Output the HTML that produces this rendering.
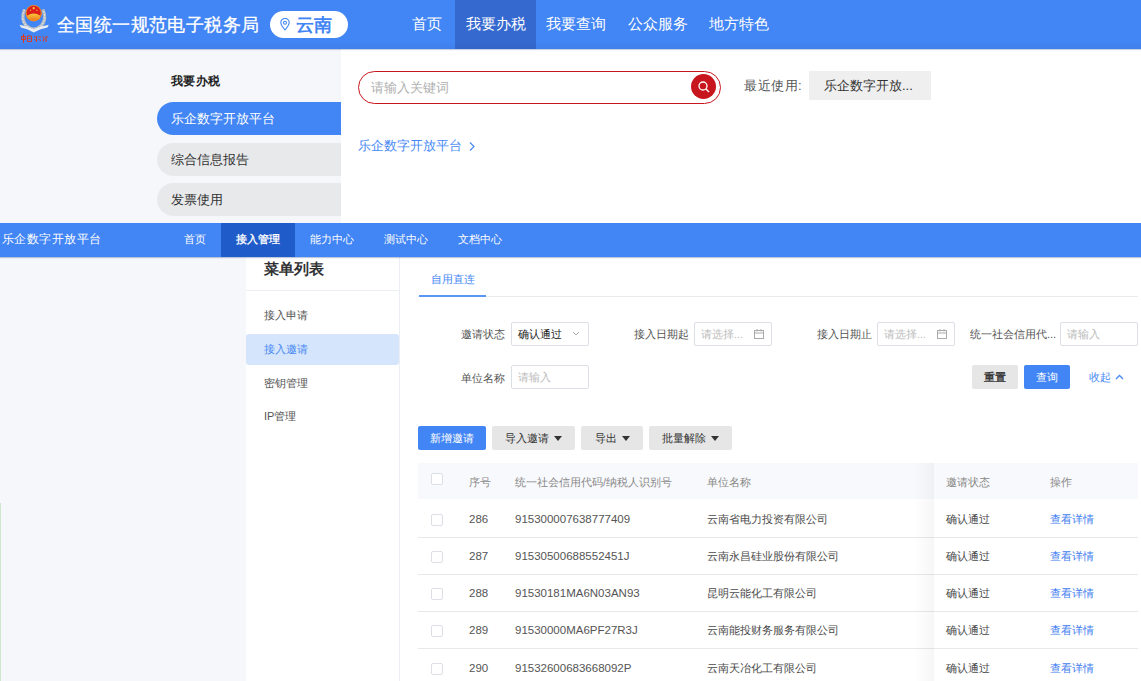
<!DOCTYPE html>
<html><head><meta charset="utf-8">
<style>
*{margin:0;padding:0;box-sizing:border-box}
html{background:#fff}
html,body{width:1141px;height:681px;overflow:hidden;font-family:"Liberation Sans",sans-serif;color:#333}
.a{position:absolute;white-space:nowrap}
#hdr{left:0;top:0;width:1141px;height:48.5px;background:linear-gradient(#4285f4 85%,#3f7fec);box-shadow:0 1px 1px rgba(0,40,120,.2)}
.nv{top:0;height:48px;line-height:47px;font-size:15px;color:#fff;text-align:center}
#sec1l{z-index:-1;left:0;top:48.5px;width:341px;height:174px;background:#f5f7fa}
#sec1r{z-index:-1;left:341px;top:48.5px;width:800px;height:174px;background:#fff}
.pill{left:157px;width:184px;height:33px;border-radius:16.5px 0 0 16.5px;background:#e8e9eb;font-size:13px;line-height:33px;padding-left:14px;color:#333}
#bar2{left:0;top:222.5px;width:1141px;height:34px;background:#4285f4;box-shadow:0 1px 1px rgba(0,40,120,.25)}
.nv2{top:0;height:34px;line-height:33px;font-size:11px;color:#fff;text-align:center;width:74px}
#sec3l{z-index:-1;left:0;top:257px;width:246px;height:424px;background:#f5f7fa}
#menu{z-index:-1;left:246px;top:257px;width:154px;height:424px;background:#fff;border-right:1px solid #ebeef5}
#cont{z-index:-1;left:400px;top:257px;width:741px;height:424px;background:#fff}
.mi{left:264px;font-size:11px;color:#555;line-height:13px}
.lbl{font-size:11px;color:#555;line-height:14px}
.inp{height:24px;border:1px solid #dcdfe6;border-radius:2px;background:#fff;font-size:11px;line-height:22px;padding-left:6px;color:#bbb}
.btn{height:24px;border-radius:2px;font-size:11px;line-height:24px;text-align:center;background:#e6e6e6;color:#333}
.th{font-size:11px;color:#888;line-height:14px}
.td{font-size:11px;color:#4a4a4a;line-height:14px}
.num{font-size:11.5px;color:#555;line-height:14px}
.cb{width:12px;height:12px;border:1px solid #dcdfe6;border-radius:2px;background:#fff}
.rl{left:418px;width:720px;height:1px;background:#e8e8e8}
.caret{display:inline-block;width:0;height:0;border-left:4px solid transparent;border-right:4px solid transparent;border-top:5px solid #333;vertical-align:middle;margin-left:5px;position:relative;top:-1px}
</style></head><body>
<!-- header -->
<div class="a" id="hdr"></div>
<svg class="a" style="left:15px;top:2px" width="40" height="44" viewBox="0 0 40 44">
<defs><linearGradient id="gg" x1="0" y1="0" x2="0" y2="1"><stop offset="0" stop-color="#f9c93a"/><stop offset="1" stop-color="#ef7d1e"/></linearGradient></defs>
<path d="M9.5 7.5 Q5.5 17 11 23.5 Q15 27 18.7 27 Q22.5 27 26.5 23.5 Q32 17 28 7.5" fill="none" stroke="#b9bdc4" stroke-width="3.2"/>
<path d="M9.5 7.5 Q5.5 17 11 23.5 Q15 27 18.7 27 Q22.5 27 26.5 23.5 Q32 17 28 7.5" fill="none" stroke="#dfe2e6" stroke-width="1.2" stroke-dasharray="1.5 1.5"/>
<path d="M4.6 22.8 Q11 24 18.7 27.5 Q26.5 24 33.8 22.8 L32.5 25.5 Q25.5 26.5 18.7 30.5 Q12 26.5 6 25.5 Z" fill="#eceef1"/>
<circle cx="18.7" cy="11.2" r="8.2" fill="#f08c24"/>
<circle cx="18.7" cy="10.8" r="7.1" fill="#dd1f1c"/>
<path d="M12.3 13.5 Q18.7 9.5 25.1 13.5 L24.6 17 Q18.7 19.6 12.8 17 Z" fill="url(#gg)"/>
<circle cx="18.7" cy="6.2" r="1.1" fill="#f6cf45"/>
<circle cx="15.5" cy="8.2" r=".6" fill="#f6cf45"/><circle cx="21.9" cy="8.2" r=".6" fill="#f6cf45"/>
<path d="M8.5 32 V41 M6.5 34.5 H10.5 V37.5 H6.5Z M12.5 34 H16.5 V39.5 H12.5Z M13.5 36.5 H15.5 M19 34 L20.5 35.5 M19 37 L20.5 38.5 M21.5 34 V40 M23.5 35 H26 M23.5 37.5 L26 38.5 M28 34.5 Q30.5 37 28 39.5 M30 35 H33 M31 36 V40" stroke="#d93a20" stroke-width="1" fill="none"/>
</svg>
<div class="a" style="left:57px;top:10.5px;font-size:18px;letter-spacing:.4px;line-height:28px;color:#fff;-webkit-text-stroke:.3px #fff">全国统一规范电子税务局</div>
<div class="a" style="left:270px;top:11px;width:78px;height:27px;border-radius:14px;background:#fff"></div>
<svg class="a" style="left:279px;top:18px" width="12" height="13" viewBox="0 0 12 13"><path d="M6 12 C3 8.5 1.8 6.5 1.8 4.6 A4.2 4.2 0 0 1 10.2 4.6 C10.2 6.5 9 8.5 6 12Z" fill="none" stroke="#4285f4" stroke-width="1.1"/><circle cx="6" cy="4.7" r="1.5" fill="none" stroke="#4285f4" stroke-width="1.1"/></svg>
<div class="a" style="left:296px;top:10.5px;font-size:18px;font-weight:bold;line-height:28px;color:#4285f4">云南</div>
<div class="a nv" style="left:401px;width:52px">首页</div>
<div class="a nv" style="left:455px;width:81px;height:48.5px;background:linear-gradient(#3669d0 85%,#3263c8)">我要办税</div>
<div class="a nv" style="left:536px;width:80px">我要查询</div>
<div class="a nv" style="left:618px;width:80px">公众服务</div>
<div class="a nv" style="left:699px;width:80px">地方特色</div>

<!-- section 1 -->
<div class="a" id="sec1l"></div>
<div class="a" id="sec1r"></div>
<div class="a" style="left:171px;top:74px;font-size:12px;letter-spacing:.4px;font-weight:bold;color:#222;line-height:15px">我要办税</div>
<div class="a pill" style="top:102px;background:#4285f4;color:#fff">乐企数字开放平台</div>
<div class="a pill" style="top:143px">综合信息报告</div>
<div class="a pill" style="top:183px">发票使用</div>

<div class="a" style="left:358px;top:71px;width:363px;height:33px;border:1.6px solid #c8161e;border-radius:17px;background:#fff"></div>
<div class="a" style="left:371px;top:79px;font-size:13px;color:#b0b0b0;line-height:17px">请输入关键词</div>
<div class="a" style="left:691px;top:74px;width:25px;height:25px;border-radius:50%;background:#c8161e"></div>
<svg class="a" style="left:697px;top:80px" width="14" height="14" viewBox="0 0 14 14"><circle cx="6" cy="6" r="4" fill="none" stroke="#fff" stroke-width="1.3"/><path d="M9 9 L12 12" stroke="#fff" stroke-width="1.4"/></svg>
<div class="a" style="left:744px;top:77px;font-size:13px;letter-spacing:.5px;color:#555;line-height:17px">最近使用:</div>
<div class="a" style="left:809px;top:71px;width:122px;height:29px;background:#efefef;font-size:13px;line-height:29px;padding-left:15px;color:#333">乐企数字开放...</div>
<div class="a" style="left:358px;top:137px;font-size:13px;color:#4a8af4;line-height:17px">乐企数字开放平台</div>
<svg class="a" style="left:468px;top:141px" width="8" height="11" viewBox="0 0 8 11"><path d="M2 1.5 L6 5.5 L2 9.5" fill="none" stroke="#4a8af4" stroke-width="1.2"/></svg>

<!-- bar 2 -->
<div class="a" id="bar2"></div>
<div class="a" style="left:2px;top:231px;font-size:12px;letter-spacing:.43px;color:#fff;line-height:16px">乐企数字开放平台</div>
<div class="a nv2" style="left:169px;top:222.5px;width:52px">首页</div>
<div class="a nv2" style="left:221px;top:222.5px;background:#1f5bc9;-webkit-text-stroke:.3px #fff">接入管理</div>
<div class="a nv2" style="left:295px;top:222.5px">能力中心</div>
<div class="a nv2" style="left:369px;top:222.5px">测试中心</div>
<div class="a nv2" style="left:443px;top:222.5px">文档中心</div>

<!-- section 3 -->
<div class="a" id="sec3l"></div>
<div class="a" style="left:0;top:503px;width:1px;height:178px;background:#cde6cd"></div>
<div class="a" id="menu"></div>
<div class="a" id="cont"></div>
<div class="a" style="left:264px;top:259px;font-size:15px;font-weight:bold;color:#303133;line-height:20px">菜单列表</div>
<div class="a" style="left:246px;top:290px;width:153px;height:1px;background:#ebeef5"></div>
<div class="a mi" style="top:309px">接入申请</div>
<div class="a" style="left:246px;top:334px;width:153px;height:31px;background:#d5e5fb;border-radius:3px"></div>
<div class="a mi" style="top:343px;color:#4a8af4">接入邀请</div>
<div class="a mi" style="top:377px">密钥管理</div>
<div class="a mi" style="top:410px">IP管理</div>

<!-- tabs -->
<div class="a" style="left:431px;top:272px;font-size:11px;color:#4a8af4;line-height:14px">自用直连</div>
<div class="a" style="left:418px;top:296px;width:720px;height:1px;background:#e8eaee"></div>
<div class="a" style="left:419px;top:295px;width:67px;height:2px;background:#5b95f5"></div>

<!-- form row1 -->
<div class="a lbl" style="left:461px;top:327px">邀请状态</div>
<div class="a inp" style="left:511px;top:322px;width:78px;color:#222">确认通过</div>
<svg class="a" style="left:572px;top:331px" width="8" height="6" viewBox="0 0 8 6"><path d="M1 1 L4 4 L7 1" fill="none" stroke="#aaa" stroke-width="1"/></svg>
<div class="a lbl" style="left:634px;top:327px">接入日期起</div>
<div class="a inp" style="left:694px;top:322px;width:78px">请选择...</div>
<svg class="a" style="left:754px;top:329px" width="10" height="10" viewBox="0 0 10 10"><rect x="0.5" y="1.5" width="9" height="8" fill="none" stroke="#aaa" stroke-width="1"/><path d="M0.5 4 H9.5 M3 0 V2.5 M7 0 V2.5" stroke="#aaa" stroke-width="1"/></svg>
<div class="a lbl" style="left:817px;top:327px">接入日期止</div>
<div class="a inp" style="left:877px;top:322px;width:78px">请选择...</div>
<svg class="a" style="left:937px;top:329px" width="10" height="10" viewBox="0 0 10 10"><rect x="0.5" y="1.5" width="9" height="8" fill="none" stroke="#aaa" stroke-width="1"/><path d="M0.5 4 H9.5 M3 0 V2.5 M7 0 V2.5" stroke="#aaa" stroke-width="1"/></svg>
<div class="a lbl" style="left:970px;top:327px">统一社会信用代...</div>
<div class="a inp" style="left:1060px;top:322px;width:78px">请输入</div>
<!-- form row2 -->
<div class="a lbl" style="left:461px;top:371px">单位名称</div>
<div class="a inp" style="left:511px;top:365px;width:78px">请输入</div>
<div class="a btn" style="left:972px;top:365px;width:46px;-webkit-text-stroke:.35px #333">重置</div>
<div class="a btn" style="left:1024px;top:365px;width:46px;background:#4285f4;color:#fff">查询</div>
<div class="a" style="left:1089px;top:370px;font-size:11px;color:#4a8af4;line-height:14px">收起</div>
<svg class="a" style="left:1115px;top:374px" width="9" height="6" viewBox="0 0 9 6"><path d="M1 5 L4.5 1.5 L8 5" fill="none" stroke="#4a8af4" stroke-width="1.4"/></svg>

<!-- action buttons -->
<div class="a btn" style="left:418px;top:426px;width:68px;background:#4285f4;color:#fff">新增邀请</div>
<div class="a btn" style="left:492px;top:426px;width:83px">导入邀请<span class="caret"></span></div>
<div class="a btn" style="left:581px;top:426px;width:62px">导出<span class="caret"></span></div>
<div class="a btn" style="left:649px;top:426px;width:83px">批量解除<span class="caret"></span></div>

<!-- table -->
<div class="a" style="left:418px;top:463px;width:720px;height:36px;background:#f8f9fc"></div>
<div class="a cb" style="left:431px;top:473px"></div>
<div class="a th" style="left:469px;top:475px">序号</div>
<div class="a th" style="left:515px;top:475px">统一社会信用代码/纳税人识别号</div>
<div class="a th" style="left:707px;top:475px">单位名称</div>

<div class="a" style="left:934px;top:463px;width:204px;height:36px;background:#f8f9fc"></div>
<div class="a rl" style="top:537.0px"></div>
<div class="a cb" style="left:431px;top:514.0px"></div>
<div class="a num" style="left:469px;top:512.0px">286</div>
<div class="a num" style="left:515px;top:512.0px">915300007638777409</div>
<div class="a td" style="left:707px;top:512.0px">云南省电力投资有限公司</div>
<div class="a td" style="left:946px;top:512.0px">确认通过</div>
<div class="a td" style="left:1050px;top:512.0px;color:#3f7ef0">查看详情</div>
<div class="a rl" style="top:574.0px"></div>
<div class="a cb" style="left:431px;top:551.0px"></div>
<div class="a num" style="left:469px;top:549.0px">287</div>
<div class="a num" style="left:515px;top:549.0px">91530500688552451J</div>
<div class="a td" style="left:707px;top:549.0px">云南永昌硅业股份有限公司</div>
<div class="a td" style="left:946px;top:549.0px">确认通过</div>
<div class="a td" style="left:1050px;top:549.0px;color:#3f7ef0">查看详情</div>
<div class="a rl" style="top:611.3px"></div>
<div class="a cb" style="left:431px;top:588.3px"></div>
<div class="a num" style="left:469px;top:586.3px">288</div>
<div class="a num" style="left:515px;top:586.3px">91530181MA6N03AN93</div>
<div class="a td" style="left:707px;top:586.3px">昆明云能化工有限公司</div>
<div class="a td" style="left:946px;top:586.3px">确认通过</div>
<div class="a td" style="left:1050px;top:586.3px;color:#3f7ef0">查看详情</div>
<div class="a rl" style="top:648.4px"></div>
<div class="a cb" style="left:431px;top:625.4px"></div>
<div class="a num" style="left:469px;top:623.4px">289</div>
<div class="a num" style="left:515px;top:623.4px">91530000MA6PF27R3J</div>
<div class="a td" style="left:707px;top:623.4px">云南能投财务服务有限公司</div>
<div class="a td" style="left:946px;top:623.4px">确认通过</div>
<div class="a td" style="left:1050px;top:623.4px;color:#3f7ef0">查看详情</div>
<div class="a cb" style="left:431px;top:662.5px"></div>
<div class="a num" style="left:469px;top:660.5px">290</div>
<div class="a num" style="left:515px;top:660.5px">91532600683668092P</div>
<div class="a td" style="left:707px;top:660.5px">云南天冶化工有限公司</div>
<div class="a td" style="left:946px;top:660.5px">确认通过</div>
<div class="a td" style="left:1050px;top:660.5px;color:#3f7ef0">查看详情</div>
<div class="a" style="left:914px;top:463px;width:20px;height:218px;background:linear-gradient(to right,rgba(0,0,0,0),rgba(0,0,0,.035))"></div>
<div class="a th" style="left:946px;top:475px">邀请状态</div>
<div class="a th" style="left:1050px;top:475px">操作</div>
</body></html>
